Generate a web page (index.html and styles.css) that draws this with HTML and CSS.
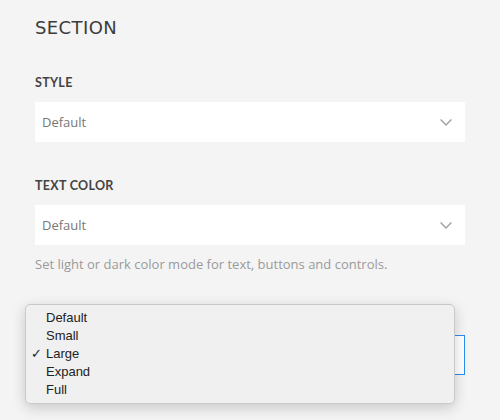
FILE: index.html
```html
<!DOCTYPE html>
<html lang="en">
<head>
  <meta charset="UTF-8">
  <meta name="viewport" content="width=device-width, initial-scale=1.0">
  <title>Section Settings</title>
  <link rel="stylesheet" href="styles.css">
</head>
<body>
  <div class="panel">
    <h2 class="panel-title">Section</h2>

    <div class="field">
      <label class="field-label">Style</label>
      <div class="select">
        <span class="select-value">Default</span>
        <svg class="chevron" width="12" height="7" viewBox="0 0 12 7"><path d="M0.6 0.6 L6 6 L11.4 0.6" fill="none" stroke="#a0a0a0" stroke-width="1.4"/></svg>
      </div>
    </div>

    <div class="field">
      <label class="field-label">Text Color</label>
      <div class="select">
        <span class="select-value">Default</span>
        <svg class="chevron" width="12" height="7" viewBox="0 0 12 7"><path d="M0.6 0.6 L6 6 L11.4 0.6" fill="none" stroke="#a0a0a0" stroke-width="1.4"/></svg>
      </div>
      <p class="field-help">Set light or dark color mode for text, buttons and controls.</p>
    </div>

    <!-- width select, open: its label and value sit under the menu -->
    <div class="field field-open">
      <div class="select focused"></div>
    </div>
  </div>

  <ul class="menu">
    <li>Default</li>
    <li>Small</li>
    <li class="checked">Large</li>
    <li>Expand</li>
    <li>Full</li>
  </ul>
</body>
</html>
```

FILE: styles.css
```css
body {
  margin: 0;
  background-color: #f4f4f4;
  font-family: "Open Sans", sans-serif;
}
.panel {
  padding: 16px 35px 0;
}
.panel-title {
  margin: 0 0 35px;
  font-family: "DejaVu Sans", sans-serif;
  font-size: 18px;
  font-weight: 400;
  letter-spacing: 0.4px;
  line-height: 24px;
  text-transform: uppercase;
  color: #3c3c3c;
}
.field {
  margin-bottom: 36px;
}
.field-label {
  display: block;
  margin-bottom: 11px;
  font-family: Lato, sans-serif;
  font-size: 12.5px;
  font-weight: 700;
  letter-spacing: 0.3px;
  line-height: 16px;
  text-transform: uppercase;
  color: #444;
}
.select {
  box-sizing: border-box;
  height: 40px;
  padding: 0 13px 0 7px;
  display: flex;
  align-items: center;
  justify-content: space-between;
  background-color: #fff;
  font-size: 13px;
  color: #777;
}
.select.focused {
  border: 1px solid #2a8cf0;
}
.field-help {
  margin: 10px 0 0;
  font-size: 13px;
  line-height: 18px;
  color: #9a9a9a;
}
.field-open {
  padding-top: 26px;
}
.menu {
  position: absolute;
  left: 25px;
  top: 304px;
  width: 428px;
  margin: 0;
  padding: 4px 0;
  list-style: none;
  background-color: #f0f0f0;
  border: 1px solid #c9c9c9;
  border-radius: 5px;
  box-shadow: 0 4px 14px rgba(0, 0, 0, 0.18);
  font-family: "Liberation Sans", Arial, sans-serif;
  font-size: 13px;
  line-height: 18px;
  color: #222;
}
.menu li {
  padding-left: 20px;
}
.menu li.checked::before {
  content: "\2713";
  display: inline-block;
  width: 15px;
  margin-left: -15px;
}
```
